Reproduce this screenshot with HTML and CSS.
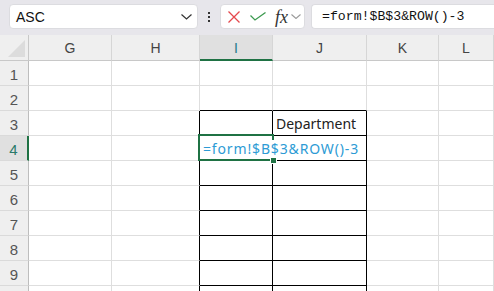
FILE: index.html
```html
<!DOCTYPE html>
<html lang="en">
<head>
  <meta charset="UTF-8" />
  <title>Sheet</title>
  <link rel="stylesheet" href="styles.css">
</head>
<body>
  <div class="toolbar">
    <div class="namebox">
      <span>ASC</span>
      <svg class="chev" width="11" height="6" viewBox="0 0 11 6"><path d="M0.5 0.5 L5.5 5 L10.5 0.5" fill="none" stroke="#333" stroke-width="1.2"/></svg>
    </div>
    <div class="dots"><i></i><i></i><i></i></div>
    <div class="fxbox">
      <svg width="12" height="12" viewBox="0 0 12 12"><path d="M0.5 0.5 L11.5 11.5 M11.5 0.5 L0.5 11.5" stroke="#e5484d" stroke-width="1.3" fill="none"/></svg>
      <svg width="16" height="9" viewBox="0 0 16 9"><path d="M0.5 3.5 L5 8 L15.5 0.5" stroke="#3d9a50" stroke-width="1.3" fill="none"/></svg>
      <span class="fx">fx</span>
      <svg width="10" height="5" viewBox="0 0 10 5"><path d="M0.5 0.5 L5 4.5 L9.5 0.5" fill="none" stroke="#9a9a9a" stroke-width="1.1"/></svg>
    </div>
    <div class="formula">=form!$B$3&amp;ROW()-3</div>
  </div>

  <div class="sheet">
    <div class="grid">
      <div class="corner"><div class="tri"></div></div>
      <div class="hdr">G</div><div class="hdr">H</div><div class="hdr sel">I</div><div class="hdr">J</div><div class="hdr">K</div><div class="hdr">L</div>

      <div class="rh">1</div><div class="c"></div><div class="c"></div><div class="c"></div><div class="c"></div><div class="c"></div><div class="c"></div>
      <div class="rh">2</div><div class="c"></div><div class="c"></div><div class="c kb"></div><div class="c kb"></div><div class="c"></div><div class="c"></div>
      <div class="rh">3</div><div class="c"></div><div class="c kr"></div><div class="c box"></div><div class="c box">Department</div><div class="c"></div><div class="c"></div>
      <div class="rh sel">4</div><div class="c"></div><div class="c kr"></div><div class="c box"><span class="fml">=form!$B$3&amp;ROW()-3</span></div><div class="c box"></div><div class="c"></div><div class="c"></div>
      <div class="rh">5</div><div class="c"></div><div class="c kr"></div><div class="c box"></div><div class="c box"></div><div class="c"></div><div class="c"></div>
      <div class="rh">6</div><div class="c"></div><div class="c kr"></div><div class="c box"></div><div class="c box"></div><div class="c"></div><div class="c"></div>
      <div class="rh">7</div><div class="c"></div><div class="c kr"></div><div class="c box"></div><div class="c box"></div><div class="c"></div><div class="c"></div>
      <div class="rh">8</div><div class="c"></div><div class="c kr"></div><div class="c box"></div><div class="c box"></div><div class="c"></div><div class="c"></div>
      <div class="rh">9</div><div class="c"></div><div class="c kr"></div><div class="c box"></div><div class="c box"></div><div class="c"></div><div class="c"></div>
      <div class="rh">10</div><div class="c"></div><div class="c kr"></div><div class="c box"></div><div class="c box"></div><div class="c"></div><div class="c"></div>
    </div>
    <div class="selection"><div class="handle"></div></div>
  </div>
</body>
</html>
```

FILE: styles.css
```css
* { margin: 0; padding: 0; box-sizing: border-box; }
body {
  width: 494px; height: 291px;
  overflow: hidden;
  background: #fff;
  font-family: 'Noto Sans', 'Liberation Sans', sans-serif;
  color: #222;
}

/* formula bar */
.toolbar {
  height: 35px;
  background: #e7e6eb;
  display: flex;
  align-items: center;
  padding: 0 0 2px 9px;
}
.namebox {
  width: 189px; height: 25px;
  background: #fff;
  border: 1px solid #dcdce0;
  border-radius: 4px;
  display: flex; align-items: center; justify-content: space-between;
  padding: 0 5px 0 6px;
  font-family: 'Liberation Sans', sans-serif;
  font-size: 14px;
  color: #111;
}
.namebox .chev { margin-top: 1px; }
.dots {
  width: 22px;
  display: flex; flex-direction: column; align-items: center; gap: 2px;
}
.dots i { width: 2px; height: 2px; background: #333; display: block; }
.fxbox {
  width: 85px; height: 25px;
  background: #fff;
  border: 1px solid #dcdce0;
  border-radius: 4px;
  display: flex; align-items: center;
  padding-left: 7px;
  gap: 10px;
}
.fxbox .fx {
  font-family: 'Liberation Serif', serif;
  font-style: italic;
  font-size: 18px;
  color: #333;
  margin-left: -1px;
  margin-right: -7px;
  line-height: 1;
}
.formula {
  flex: 1;
  height: 25px;
  margin-left: 6px;
  background: #fff;
  border: 1px solid #dcdce0;
  border-right: none;
  border-radius: 4px 0 0 4px;
  padding: 0 0 0 10px;
  display: flex; align-items: center;
  font-family: 'Liberation Mono', monospace;
  font-size: 13.2px;
  color: #111;
}

/* sheet */
.sheet { position: relative; }
.grid {
  display: grid;
  grid-template-columns: 29px 83px 88px 73px 94px 72px 55px;
  grid-template-rows: 26px repeat(10, 25px);
}
.corner {
  background: #efefef;
  border-right: 1px solid #c8c8c8;
  border-bottom: 1px solid #c8c8c8;
  position: relative;
}
.tri {
  position: absolute; right: 3px; bottom: 3px;
  width: 0; height: 0;
  border-left: 17px solid transparent;
  border-bottom: 17px solid #dcdcdc;
}
.hdr {
  background: #efefef;
  border-right: 1px solid #d6d6d6;
  border-bottom: 1px solid #c8c8c8;
  display: flex; align-items: center; justify-content: center;
  font-family: 'Liberation Sans', sans-serif;
  font-size: 14px;
  color: #444;
  padding-top: 1px;
}
.hdr.sel {
  background: #e0e0e0;
  border-bottom: 2px solid #1f7244;
  color: #1c7a8a;
}
.rh {
  background: #efefef;
  border-right: 1px solid #bdbdbd;
  border-bottom: 1px solid #dadada;
  display: flex; align-items: center; justify-content: center;
  font-family: 'Liberation Sans', sans-serif;
  font-size: 15px;
  color: #555;
  padding-top: 2px;
}
.rh.sel {
  background: #e0e0e0;
  border-right: 2px solid #1f7244;
  color: #2a7a6a;
}
.c {
  border-right: 1px solid #dedede;
  border-bottom: 1px solid #dedede;
  display: flex; align-items: flex-end;
  padding: 0 0 2px 3px;
  font-size: 14px;
  line-height: 18px;
  white-space: nowrap;
  color: #222;
}
.c.kr { border-right-color: #000; }
.c.kb { border-bottom-color: #000; }
.c.box { border-right-color: #000; border-bottom-color: #000; }
.fml {
  position: relative;
  z-index: 2;
  color: #2d9bd5;
  font-size: 14px;
  letter-spacing: 0.85px;
  background: #fff;
}

/* active cell */
.selection {
  position: absolute;
  left: 198px; top: 99px;
  width: 76px; height: 27px;
  border: 2px solid #1f7244;
  z-index: 1;
}
.handle {
  position: absolute;
  right: -5px; bottom: -5px;
  width: 7px; height: 7px;
  background: #1f7244;
  border: 1px solid #fff;
}
```
